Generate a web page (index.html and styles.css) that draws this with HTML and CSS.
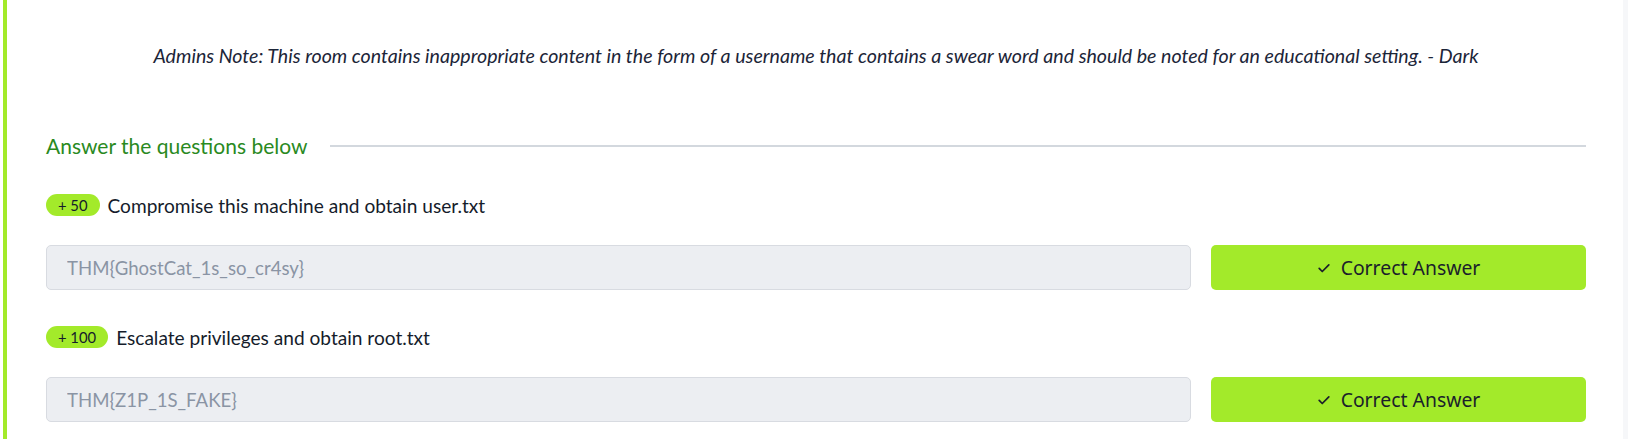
FILE: index.html
```html
<!DOCTYPE html>
<html lang="en">
<head>
<meta charset="utf-8">
<title>Task</title>
<link rel="stylesheet" href="styles.css">
</head>
<body>
<div class="page">
  <main class="task">
    <p class="note"><em>Admins Note: This room contains inappropriate content in the form of a username that contains a swear word and should be noted for an educational setting. - Dark</em></p>
    <section class="questions">
      <div class="qhead">
        <h3 class="qhead-title">Answer the questions below</h3>
        <span class="qhead-rule"></span>
      </div>
      <div class="question">
        <div class="qtitle"><span class="badge">+ 50</span><span class="qtext">Compromise this machine and obtain user.txt</span></div>
        <div class="qrow">
          <input class="answer" type="text" value="THM{GhostCat_1s_so_cr4sy}" readonly>
          <button class="correct" type="button"><svg class="check" viewBox="0 0 16 16" width="14" height="14"><path d="M2.5 8.5l3.5 3.5 7.5-7.5" fill="none" stroke="#1b1f2a" stroke-width="2" stroke-linecap="round" stroke-linejoin="round"/></svg>Correct Answer</button>
        </div>
      </div>
      <div class="question">
        <div class="qtitle"><span class="badge">+ 100</span><span class="qtext">Escalate privileges and obtain root.txt</span></div>
        <div class="qrow">
          <input class="answer" type="text" value="THM{Z1P_1S_FAKE}" readonly>
          <button class="correct" type="button"><svg class="check" viewBox="0 0 16 16" width="14" height="14"><path d="M2.5 8.5l3.5 3.5 7.5-7.5" fill="none" stroke="#1b1f2a" stroke-width="2" stroke-linecap="round" stroke-linejoin="round"/></svg>Correct Answer</button>
        </div>
      </div>
    </section>
  </main>
  <div class="scroll-strip"></div>
</div>
</body>
</html>
```
FILE: styles.css
```css
* { box-sizing: border-box; }
html, body { margin: 0; padding: 0; background: #ffffff; }
body { font-family: "Lato", "Noto Sans", sans-serif; color: #151c2b; }

.page {
  display: flex;
  height: 439px;
  overflow: hidden;
}

.task {
  flex: 1;
  margin-left: 3px;
  border-left: 4px solid #a3ea2a;
  padding: 0 37px 0 39px;
}

.scroll-strip {
  width: 5px;
  background: #f6f7f9;
}

.note {
  margin: 0;
  padding-top: 44px;
  text-align: center;
  font-size: 19.6px;
  line-height: 24px;
  color: #1c2538;
}
.note em { font-style: italic; }

.questions { margin-top: 64px; }

.qhead {
  display: flex;
  align-items: center;
  gap: 23px;
}
.qhead-title {
  margin: 0;
  font-weight: 400;
  font-size: 21px;
  line-height: 28px;
  color: #2a8a1e;
}
.qhead-rule {
  flex: 1;
  height: 2px;
  background: #d3d8de;
}

.question { margin-top: 34px; }
.question + .question { margin-top: 36px; }

.qtitle {
  display: flex;
  align-items: center;
  gap: 8px;
  height: 22px;
}
.badge {
  display: inline-flex;
  align-items: center;
  justify-content: center;
  height: 22px;
  padding: 0 12px;
  border-radius: 11px;
  background: #a3ea2a;
  font-size: 14.8px;
  color: #151c2b;
}
.qtext {
  font-size: 19.1px;
  color: #151c2b;
}

.qrow {
  display: grid;
  grid-template-columns: 1fr 375px;
  gap: 20px;
  margin-top: 29px;
}
.answer {
  height: 45px;
  border: 1px solid #d8dbe1;
  border-radius: 5px;
  background: #eceef2;
  padding: 0 20px;
  font-family: "Lato", "Noto Sans", sans-serif;
  font-size: 18.6px;
  color: #8a94a4;
  outline: none;
}
.correct {
  display: flex;
  align-items: center;
  justify-content: center;
  gap: 10px;
  height: 45px;
  border: none;
  border-radius: 5px;
  background: #a3ea2a;
  font-family: "Noto Sans", sans-serif;
  font-size: 19.4px;
  color: #1b1f2a;
  padding: 0;
}
.check { flex: none; }
```
